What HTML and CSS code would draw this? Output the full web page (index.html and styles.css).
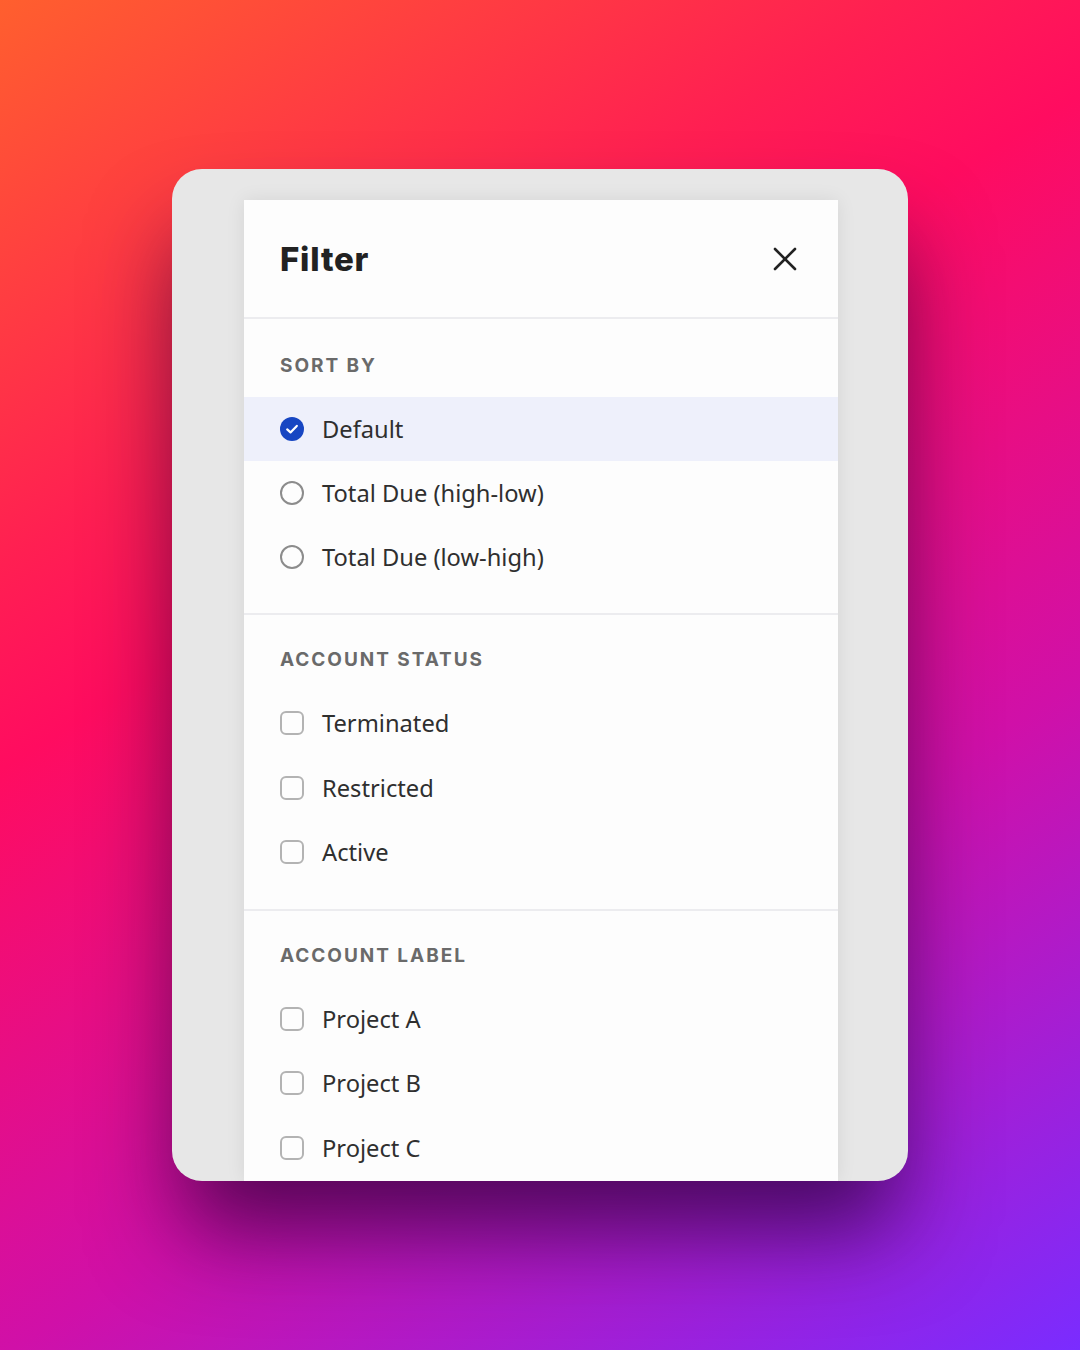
FILE: index.html
```html
<!DOCTYPE html>
<html lang="en">
<head>
  <meta charset="UTF-8" />
  <title>Filter</title>
  <link rel="stylesheet" href="styles.css">
</head>
<body>

  <div class="frame">
    <div class="panel">

      <!-- HEADER -->
      <header class="panel-head">
        <h1>Filter</h1>
        <button class="close" aria-label="Close">
          <svg viewBox="0 0 24 24" width="24" height="24">
            <path d="M2 2 L22 22 M22 2 L2 22" stroke="#222" stroke-width="2.6" stroke-linecap="round" fill="none"/>
          </svg>
        </button>
      </header>

      <!-- SORT BY -->
      <section class="group first">
        <h2>Sort by</h2>
        <div class="option radio selected">
          <span class="mark">
            <svg viewBox="0 0 24 24" width="24" height="24">
              <circle cx="12" cy="12" r="12" fill="#1746c2"/>
              <path d="M7.2 12.4 L10.5 15.4 L16.8 8.9" stroke="#fff" stroke-width="2.2" stroke-linecap="round" stroke-linejoin="round" fill="none"/>
            </svg>
          </span>
          Default
        </div>
        <div class="option radio"><span class="mark"></span>Total Due (high-low)</div>
        <div class="option radio"><span class="mark"></span>Total Due (low-high)</div>
      </section>

      <!-- ACCOUNT STATUS -->
      <section class="group">
        <h2>Account status</h2>
        <div class="option check"><span class="mark"></span>Terminated</div>
        <div class="option check"><span class="mark"></span>Restricted</div>
        <div class="option check"><span class="mark"></span>Active</div>
      </section>

      <!-- ACCOUNT LABEL -->
      <section class="group">
        <h2>Account label</h2>
        <div class="option check"><span class="mark"></span>Project A</div>
        <div class="option check"><span class="mark"></span>Project B</div>
        <div class="option check"><span class="mark"></span>Project C</div>
      </section>

    </div>
  </div>

</body>
</html>
```

FILE: styles.css
```css
:root {
  --text: #2f2f2f;
  --label: #6a6a6a;
  --line: #ececef;
  --blue: #1746c2;
  --highlight: #eef0fb;
}

html, body {
  margin: 0;
  padding: 0;
}

body {
  width: 1080px;
  height: 1350px;
  display: flex;
  align-items: center;
  justify-content: center;
  background: linear-gradient(148deg, #ff5f2e 0%, #ff1f52 28%, #ff0c60 38%, #d010a8 67%, #7a2cff 100%);
  font-family: 'Noto Sans', 'Open Sans', sans-serif;
  color: var(--text);
}

.frame {
  width: 736px;
  height: 1012px;
  box-sizing: border-box;
  padding: 31px 70px 0 72px;
  background: #e7e7e7;
  border-radius: 30px;
  overflow: hidden;
  box-shadow: 0 60px 90px -10px rgba(30, 0, 50, 0.7);
}

.panel {
  height: 100%;
  background: #fdfdfd;
  box-shadow: 0 0 18px rgba(0, 0, 0, 0.08);
}

.panel-head {
  height: 117px;
  display: flex;
  align-items: center;
  justify-content: space-between;
  padding: 0 41px 0 36px;
  border-bottom: 2px solid var(--line);
}

.panel-head h1 {
  margin: 0;
  font-family: Inter, Roboto, sans-serif;
  font-size: 33px;
  font-weight: 800;
  letter-spacing: 0.8px;
  color: #222;
}

.close {
  background: none;
  border: none;
  padding: 0;
  width: 24px;
  height: 24px;
  cursor: pointer;
}

.close svg {
  display: block;
}

.group {
  padding-bottom: 24px;
  border-bottom: 2px solid var(--line);
}

.group.first {
  padding-top: 2px;
}

.group h2 {
  margin: 0;
  padding: 33px 36px 19px;
  font-family: Inter, Roboto, sans-serif;
  font-size: 19px;
  line-height: 24px;
  font-weight: 700;
  letter-spacing: 1.95px;
  text-transform: uppercase;
  color: var(--label);
}

.option {
  display: flex;
  align-items: center;
  gap: 18px;
  padding: 0 36px;
  height: 64px;
  font-size: 23.7px;
}

.option.check {
  height: 64.5px;
}

.option.selected {
  background: var(--highlight);
}

.mark {
  flex: none;
  width: 24px;
  height: 24px;
  box-sizing: border-box;
}

.radio .mark {
  border: 2px solid #8c8c8c;
  border-radius: 50%;
}

.radio.selected .mark {
  border: none;
}

.mark svg {
  display: block;
}

.check .mark {
  border: 2px solid #b3b3b3;
  border-radius: 6px;
}
```
